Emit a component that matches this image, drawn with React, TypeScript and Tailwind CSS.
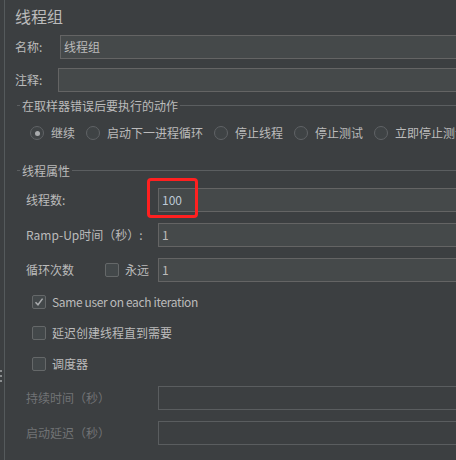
import React from "react";

function Radio({ checked = false }: { checked?: boolean }) {
  return (
    <span className="w-[14px] h-[14px] shrink-0 rounded-full border border-[#606366] bg-[#3f4345] flex items-center justify-center">
      {checked && <span className="w-[5px] h-[5px] rounded-full bg-[#a9abad]" />}
    </span>
  );
}

function Check({ checked = false }: { checked?: boolean }) {
  return (
    <span className="w-[14px] h-[14px] shrink-0 rounded-[2px] border border-[#656869] bg-[#43484a] flex items-center justify-center">
      {checked && (
        <svg width="10" height="10" viewBox="0 0 10 10">
          <path d="M1.5 5.2 L4 7.8 L8.6 1.6" fill="none" stroke="#a9abad" strokeWidth="1.5" />
        </svg>
      )}
    </span>
  );
}

function Input({ value = "", disabled = false, blue = false }: { value?: string; disabled?: boolean; blue?: boolean }) {
  return (
    <div
      className={
        disabled
          ? "flex-1 h-[24px] border border-[#5a5d5f] bg-[#3c3f41]"
          : "flex-1 h-[24px] border border-[#646464] bg-[#45494a] flex items-center pl-[3px]"
      }
    >
      <span className={blue ? "text-[#bcc8d6] leading-[22px]" : "leading-[22px]"}>{value}</span>
    </div>
  );
}

function GroupHeader({ title }: { title: string }) {
  return (
    <div className="h-[13px] flex items-center pl-[2px]">
      <span className="w-[3px] h-px bg-[#5b5e60]" />
      <span className="px-[2px] leading-[13px]">{title}</span>
      <span className="flex-1 h-px bg-[#5b5e60]" />
    </div>
  );
}

export default function App() {
  const radios = ["继续", "启动下一进程循环", "停止线程", "停止测试", "立即停止测试"];
  return (
    <div className="w-[456px] h-[460px] overflow-hidden bg-[#3c3f41] flex text-[12px] text-[#bbbbbb] font-['Noto_Sans_CJK_SC','Noto_Sans',sans-serif]">
      <div className="w-[4px] shrink-0 flex flex-col pt-[370px] gap-[3px]">
        <span className="w-[2px] h-[2px] bg-[#8a8d8f]" />
        <span className="w-[2px] h-[2px] bg-[#8a8d8f]" />
        <span className="w-[2px] h-[2px] bg-[#8a8d8f]" />
      </div>
      <div className="w-px shrink-0 bg-[#555a5c]" />
      <div className="w-[540px] shrink-0 pl-[10px] flex flex-col">
        <div className="mt-[6px] h-[20px] text-[16px] leading-[20px]">线程组</div>

        <div className="mt-[9px] flex items-center h-[24px]">
          <span className="w-[45px] shrink-0">名称:</span>
          <Input value="线程组" />
        </div>
        <div className="mt-[9px] flex items-center h-[24px]">
          <span className="w-[43px] shrink-0">注释:</span>
          <Input />
        </div>

        <div className="mt-[7px]">
          <GroupHeader title="在取样器错误后要执行的动作" />
        </div>
        <div className="mt-[14px] h-[14px] flex items-center pl-[15px] whitespace-nowrap">
          {radios.map((r, i) => (
            <div key={r} className="flex items-center mr-[11px]">
              <Radio checked={i === 0} />
              <span className="ml-[7px] leading-[14px]">{r}</span>
            </div>
          ))}
        </div>

        <div className="mt-[24px]">
          <GroupHeader title="线程属性" />
        </div>

        <div className="mt-[11px] flex items-center h-[24px] pl-[11px]">
          <span className="w-[132px] shrink-0">线程数:</span>
          <div className="flex-1 flex relative">
            <Input value="100" blue />
            <div className="absolute -left-[11px] -top-[10px] w-[51px] h-[40px] border-[3px] border-[#ff2020] rounded-[4px]" />
          </div>
        </div>
        <div className="mt-[11px] flex items-center h-[24px] pl-[11px]">
          <span className="w-[132px] shrink-0">Ramp-Up时间（秒）:</span>
          <Input value="1" />
        </div>
        <div className="mt-[11px] flex items-center h-[24px] pl-[11px]">
          <div className="w-[132px] shrink-0 flex items-center">
            <span className="w-[79px] shrink-0">循环次数</span>
            <Check />
            <span className="ml-[6px]">永远</span>
          </div>
          <Input value="1" />
        </div>

        <div className="mt-[10px] h-[20px] flex items-center pl-[17px]">
          <Check checked />
          <span className="ml-[6px] tracking-[-0.35px]">Same user on each iteration</span>
        </div>
        <div className="mt-[11px] h-[20px] flex items-center pl-[17px]">
          <Check />
          <span className="ml-[6px]">延迟创建线程直到需要</span>
        </div>
        <div className="mt-[11px] h-[20px] flex items-center pl-[17px]">
          <Check />
          <span className="ml-[6px]">调度器</span>
        </div>

        <div className="mt-[12px] flex items-center h-[24px] pl-[11px]">
          <span className="w-[132px] shrink-0 text-[#717375]">持续时间（秒）</span>
          <Input disabled />
        </div>
        <div className="mt-[11px] flex items-center h-[24px] pl-[11px]">
          <span className="w-[132px] shrink-0 text-[#717375]">启动延迟（秒）</span>
          <Input disabled />
        </div>
      </div>
    </div>
  );
}
